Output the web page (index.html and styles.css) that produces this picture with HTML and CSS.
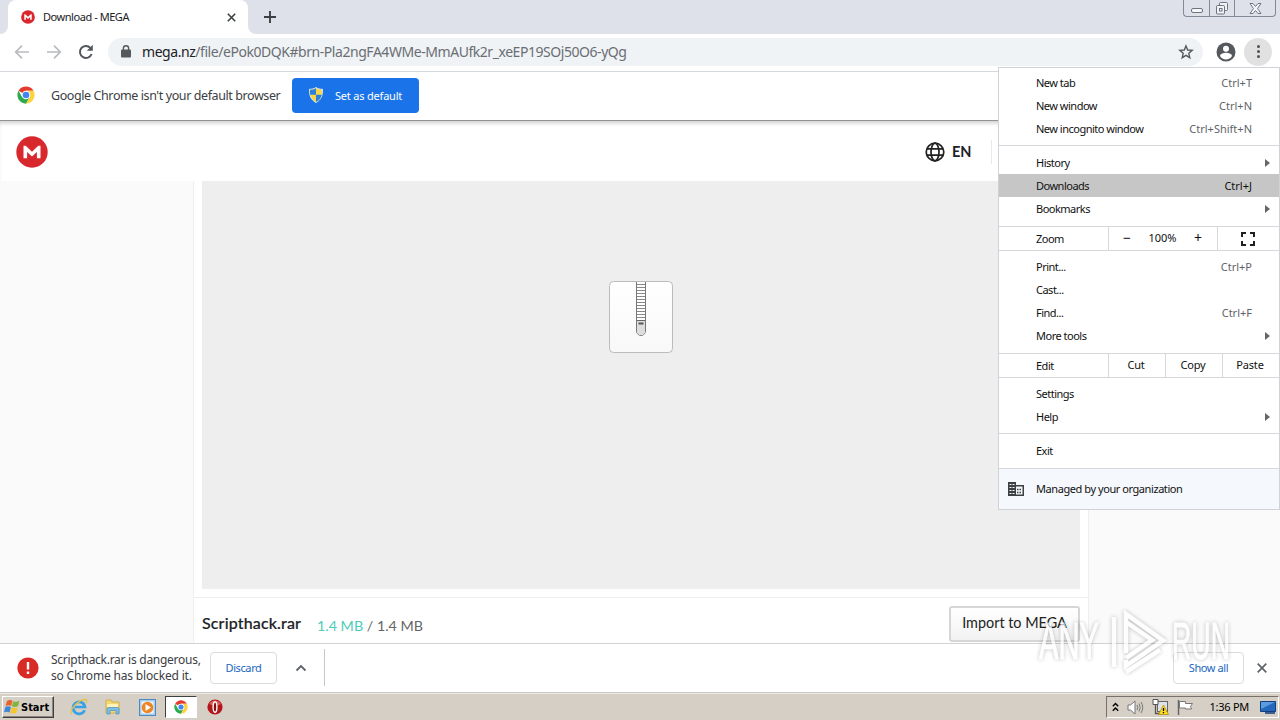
FILE: index.html
```html
<!DOCTYPE html>
<html lang="en">
<head>
    <meta charset="UTF-8">
    <meta name="viewport" content="width=device-width, initial-scale=1.0">
    <title>Download - MEGA</title>
    <link rel="stylesheet" href="styles.css">
</head>
<body>
    <!-- shared icons -->
    <svg class="defs" width="0" height="0">
        <symbol id="mega" viewBox="0 0 32 32">
            <circle cx="16" cy="16" r="15.7" fill="#d9272e"/>
            <path d="M7.500 22.300V9.700h2.200l6.300 6 6.300-6h2.200v12.600h-3.600v-6.300L16 20.600 11.100 16v6.300z" fill="#fff"/>
        </symbol>
        <symbol id="chrome" viewBox="0 0 48 48">
            <circle cx="24" cy="24" r="23" fill="#fff"/>
            <path d="M24 24 4.1 12.5A23 23 0 0 1 43.9 12.5H24z" fill="#e33b2e"/>
            <path d="M4.1 12.5A23 23 0 0 0 24 47l10-17.2H14z" fill="#2da94f"/>
            <path d="M43.9 12.5A23 23 0 0 1 24 47l10-17.2L34 18 24 12.5z" fill="#fdd23c"/>
            <circle cx="24" cy="24" r="11.5" fill="#fff"/>
            <circle cx="24" cy="24" r="8.8" fill="#4285f4"/>
        </symbol>
    </svg>

    <div class="tabstrip">
        <div class="tab-edge"></div>
        <div class="tab">
            <svg width="14" height="14"><use href="#mega"/></svg>
            <span class="tab-title">Download - MEGA</span>
            <svg class="tab-close" width="9" height="9" viewBox="0 0 9 9"><path d="M.8.8l7.4 7.4M8.2.8L.8 8.2" stroke="#3c4043" stroke-width="1.6"/></svg>
        </div>
        <div class="tab-rest">
            <svg width="12" height="12" viewBox="0 0 12 12"><path d="M6 0v12M0 6h12" stroke="#3c4043" stroke-width="1.9"/></svg>
        </div>
        <div class="window-buttons">
            <span class="wb"><svg width="12" height="5" viewBox="0 0 12 5"><rect x=".5" y=".5" width="11" height="4" rx="1.5" fill="#f6f7f9" stroke="#6d7480"/></svg></span>
            <span class="wb"><svg width="14" height="13" viewBox="0 0 14 13" fill="#f0f2f5" stroke="#6d7480"><rect x="4.500" y=".5" width="8" height="8" rx="1"/><rect x="1.500" y="3.500" width="8" height="8.500" rx="1"/><rect x="4.500" y="6.500" width="2.500" height="2.500"/></svg></span>
            <span class="wb wide"><svg width="13" height="11" viewBox="0 0 13 11"><path d="M1 .5h3l2.500 3 2.500-3h3L8.500 5.500 12 10.500H9l-2.500-3-2.500 3H1l3.500-5z" fill="#f6f7f9" stroke="#6d7480"/></svg></span>
        </div>
    </div>

    <div class="toolbar">
        <svg class="nav-icon" width="16" height="16" viewBox="0 0 16 16"><path d="M15 8H2M8 1.700L1.700 8 8 14.300" fill="none" stroke="#b9bbbe" stroke-width="1.700"/></svg>
        <svg class="nav-icon" width="16" height="16" viewBox="0 0 16 16"><path d="M1 8h13M8 1.700L14.300 8 8 14.300" fill="none" stroke="#b9bbbe" stroke-width="1.700"/></svg>
        <svg class="nav-icon" width="16" height="16" viewBox="0 0 16 16"><path d="M13.600 10A6 6 0 1 1 12.400 3.900" fill="none" stroke="#53575c" stroke-width="2"/><path d="M14.800.8v6H8.800z" fill="#53575c"/></svg>
        <div class="omnibox">
            <svg width="10" height="13" viewBox="0 0 10 13"><rect x="0" y="4.500" width="10" height="8" rx="1" fill="#55595e"/><path d="M2.400 5V3.300a2.600 2.600 0 0 1 5.200 0V5" fill="none" stroke="#55595e" stroke-width="1.400"/></svg>
            <span class="url"><b>mega.nz</b>/file/ePok0DQK#brn-Pla2ngFA4WMe-MmAUfk2r_xeEP19SOj50O6-yQg</span>
            <svg width="16" height="16" viewBox="0 0 16 16"><path d="M8 1.900l1.700 4.100 4.500.4-3.400 2.900 1 4.400L8 11.400l-3.800 2.300 1-4.400-3.400-2.900 4.500-.4z" fill="none" stroke="#55595e" stroke-width="1.400"/></svg>
        </div>
        <svg class="avatar" width="20" height="20" viewBox="0 0 20 20"><circle cx="10" cy="10" r="9.500" fill="#55595e"/><circle cx="10" cy="6.700" r="3" fill="#fff"/><path d="M4 14c0-2 4-3.200 6-3.200S16 12 16 14a7 7 0 0 1-12 0z" fill="#fff"/></svg>
        <div class="menu-button"><i></i><i></i><i></i></div>
    </div>

    <div class="infobar">
        <svg width="18" height="18"><use href="#chrome"/></svg>
        <span class="infobar-text">Google Chrome isn't your default browser</span>
        <div class="default-button">
            <svg width="14" height="16" viewBox="0 0 14 16"><path d="M7 .5c2 1.500 4 1.800 6.500 1.800 0 6-1 10.200-6.500 13.200C1.500 12.500.5 8.300.5 2.300 3 2.300 5 2 7 .5z" fill="#f7d64a" stroke="#dfe8f2"/><path d="M7 1.200v6.500H1.200Q.9 5 1 2.800C3.500 2.800 5.300 2.500 7 1.200zM7 7.700h5.800C12 11.500 10 13.600 7 15z" fill="#2f7fd6"/></svg>
            <span>Set as default</span>
        </div>
    </div>

    <div class="page">
        <div class="page-header">
            <svg width="32" height="32"><use href="#mega"/></svg>
            <div class="language">
                <svg width="20" height="20" viewBox="0 0 20 20" fill="none" stroke="#222" stroke-width="1.700"><circle cx="10" cy="10" r="8.800"/><ellipse cx="10" cy="10" rx="4" ry="8.800"/><path d="M2 6.800h16M2 13.200h16"/></svg>
                <span>EN</span>
            </div>
        </div>
        <div class="page-body">
            <div class="content">
                <div class="preview">
                    <svg width="64" height="72" viewBox="0 0 64 72">
                        <defs><linearGradient id="paper" x2="0" y2="1"><stop offset="0" stop-color="#fff"/><stop offset="1" stop-color="#f8f8f8"/></linearGradient></defs>
                        <rect x=".5" y=".5" width="63" height="71" rx="4" fill="url(#paper)" stroke="#bbb"/>
                        <path d="M27.500 1v49a4.500 4.500 0 0 0 9 0V1" fill="#fff" stroke="#777"/>
                        <path d="M28 3.500h8M28 6.500h8M28 9.500h8M28 12.500h8M28 15.500h8M28 18.500h8M28 21.500h8M28 24.500h8M28 27.500h8M28 30.500h8M28 33.500h8M28 36.500h8" stroke="#888"/>
                        <path d="M28 40h8v10a4 4 0 0 1-8 0z" fill="#ddd"/>
                        <path d="M28 39.500h8" stroke="#666"/>
                        <path d="M29.500 42.500h5" stroke="#555" stroke-width="2"/>
                    </svg>
                </div>
                <div class="file-bar">
                    <span class="file-name">Scripthack.rar</span>
                    <span class="file-size"><em>1.4 MB</em> / 1.4 MB</span>
                    <div class="import-button">Import to MEGA</div>
                </div>
            </div>
        </div>
    </div>

    <div class="downloads">
        <svg width="22" height="22" viewBox="0 0 22 22"><circle cx="11" cy="11" r="10.600" fill="#d92b25"/><path d="M11 5v7.500M11 14.500V17" stroke="#fff" stroke-width="2.400"/></svg>
        <div class="download-text"><span class="line1">Scripthack.rar is dangerous,</span><br><span class="line2">so Chrome has blocked it.</span></div>
        <div class="outline-button discard">Discard</div>
        <svg class="chevron" width="12" height="8" viewBox="0 0 12 8"><path d="M1.500 6.500L6 2l4.500 4.500" fill="none" stroke="#5f6368" stroke-width="1.800"/></svg>
        <div class="divider"></div>
        <div class="outline-button show-all">Show all</div>
        <svg width="10" height="10" viewBox="0 0 10 10"><path d="M.7.700l8.600 8.600M9.300.700L.7 9.300" stroke="#5f6368" stroke-width="1.700"/></svg>
    </div>

    <div class="taskbar">
        <div class="start">
            <svg width="17" height="16" viewBox="0 0 17 16"><path d="M3 2q3-2 5.500-.2L7.200 7Q4.500 5.500 1.600 7z" fill="#e8622a"/><path d="M9.200 2.200q3 1.500 6.300-.5L14 7q-3 1.800-6 .3z" fill="#7fb53c"/><path d="M1.400 8q2.800-1.500 5.500.2L5.500 13.500Q3 12 0 13.300z" fill="#3d86d8"/><path d="M7.700 8.400q3 1.500 6-.2l-1.400 5.500q-3 1.700-6 0z" fill="#f5c52c"/></svg>
            <span>Start</span>
        </div>
        <div class="quick">
            <svg width="18" height="18" viewBox="0 0 18 18"><path d="M14.600 12.200A6 6 0 1 1 15 9H5" fill="none" stroke="#3aa0e6" stroke-width="2.700"/><path d="M1.500 16C-1 12 9 1 15.500 1.500c1.500.2 1.300 2 .5 3.500" fill="none" stroke="#e5c342" stroke-width="1.300"/></svg>
        </div>
        <div class="quick">
            <svg width="18" height="18" viewBox="0 0 18 18"><path d="M2 2h5l1 2h7v11H2z" fill="#f2d778" stroke="#d6ae48"/><path d="M3 6h11v3H3z" fill="#fff3b8"/><path d="M3 16v-5q0-1.500 1.500-1.500h9q1.500 0 1.500 1.500v5h-3v-3.500H6V16z" fill="#79bfe8" stroke="#4c91c4" stroke-width=".7"/></svg>
        </div>
        <div class="quick">
            <svg width="17" height="17" viewBox="0 0 17 17"><rect x=".5" y=".5" width="16" height="16" fill="#a9cdec" stroke="#4d88c2"/><rect x="2.500" y="2.500" width="12" height="12" fill="#eef6fc"/><circle cx="8.500" cy="8.500" r="5.800" fill="#ef8420"/><path d="M6.500 5l5.500 3.500L6.500 12z" fill="#fff"/></svg>
        </div>
        <div class="quick active"><svg width="14" height="14"><use href="#chrome"/></svg></div>
        <div class="quick">
            <svg width="16" height="16" viewBox="0 0 16 16"><circle cx="8" cy="8" r="7.600" fill="#b3161b"/><path d="M2 5a7 7 0 0 1 12 0q-5 3-12 0z" fill="#dd5a55"/><ellipse cx="8" cy="8" rx="1.900" ry="5.300" fill="#8c0d10" stroke="#fff" stroke-width="1.400"/></svg>
        </div>
        <div class="tray">
            <svg width="7" height="10" viewBox="0 0 7 10"><path d="M.8 4.200L3.500 1.500l2.700 2.700M.8 8.700L3.500 6l2.700 2.700" fill="none" stroke="#000" stroke-width="1.400"/></svg>
            <svg width="17" height="15" viewBox="0 0 17 15"><path d="M1 5h2.500L8 1v13L3.500 10H1z" fill="#fff" stroke="#777"/><path d="M10 5q1.500 2.500 0 5M12 3.500q2.500 4 0 8M14 2q3.500 5.500 0 11" fill="none" stroke="#777"/></svg>
            <svg width="17" height="16" viewBox="0 0 17 16"><rect x="5.500" y="2.500" width="10" height="10" fill="#dfe3e8" stroke="#666"/><path d="M1 .5h5v5H1z" fill="#fff" stroke="#555"/><path d="M3.500 5.500v9H9" fill="none" stroke="#555" stroke-width="1.300"/><path d="M11.500 6l5 9.500h-10z" fill="#ffdb20" stroke="#a88600" stroke-width=".7"/><path d="M11.500 9v3M11.500 13v1.300" stroke="#000" stroke-width="1.300"/></svg>
            <svg width="17" height="15" viewBox="0 0 17 15"><path d="M1.500 0v15" stroke="#666" stroke-width="1.500"/><path d="M2.500 1.500h6v2h7l-2 3 1 2.500h-6V8h-6z" fill="#fff" stroke="#777"/></svg>
            <span class="clock">1:36 PM</span>
            <svg width="16" height="13" viewBox="0 0 16 13"><path d="M.5.500h15v10H.5z" fill="#2468bd" stroke="#123f7b"/><path d="M1 1h14L1 8z" fill="#5b9bdf"/><path d="M5 12h10" stroke="#3c5f8d" stroke-width="2"/></svg>
        </div>
    </div>

    <div class="menu">
        <div class="group first">
            <div class="item"><span>New tab</span><kbd>Ctrl+T</kbd></div>
            <div class="item"><span>New window</span><kbd>Ctrl+N</kbd></div>
            <div class="item"><span>New incognito window</span><kbd>Ctrl+Shift+N</kbd></div>
        </div>
        <div class="group history">
            <div class="item"><span>History</span><i class="arrow"></i></div>
            <div class="item selected"><span>Downloads</span><kbd>Ctrl+J</kbd></div>
            <div class="item"><span>Bookmarks</span><i class="arrow"></i></div>
        </div>
        <div class="buttons">
            <span class="label">Zoom</span>
            <div class="zoom"><span class="sign">−</span><span>100%</span><span class="sign">+</span></div>
            <div class="fullscreen"><svg width="14" height="14" viewBox="0 0 14 14"><path d="M1 5V1h4M9 1h4v4M13 9v4H9M5 13H1V9" fill="none" stroke="#202124" stroke-width="2"/></svg></div>
        </div>
        <div class="group tools">
            <div class="item"><span>Print...</span><kbd>Ctrl+P</kbd></div>
            <div class="item"><span>Cast...</span></div>
            <div class="item"><span>Find...</span><kbd>Ctrl+F</kbd></div>
            <div class="item"><span>More tools</span><i class="arrow"></i></div>
        </div>
        <div class="buttons">
            <span class="label">Edit</span>
            <div class="edit">Cut</div>
            <div class="edit">Copy</div>
            <div class="edit">Paste</div>
        </div>
        <div class="group settings">
            <div class="item"><span>Settings</span></div>
            <div class="item"><span>Help</span><i class="arrow"></i></div>
        </div>
        <div class="group exit">
            <div class="item"><span>Exit</span></div>
        </div>
        <div class="managed">
            <svg width="16" height="14" viewBox="0 0 16 14"><path d="M0 0h8v3h8v11H0z" fill="#3c4043"/><path d="M1.500 2.500h5M1.500 5.500h5M1.500 8.500h5M1.500 11.500h5" stroke="#f5f8fc" stroke-width="1.200" stroke-dasharray="2 1"/><path d="M8 4.500h6.500v8H8z" fill="#f5f8fc"/><path d="M9 7.500h4M9 10.500h4" stroke="#3c4043" stroke-width="1.500" stroke-dasharray="1.500 1"/></svg>
            <span>Managed by your organization</span>
        </div>
    </div>

    <svg class="watermark" width="210" height="76" viewBox="0 0 210 76">
        <g fill="#fff" stroke="#fff" stroke-width="1">
            <text x="9" y="55" textLength="60" lengthAdjust="spacingAndGlyphs">ANY</text>
            <text x="142" y="55" textLength="58" lengthAdjust="spacingAndGlyphs">RUN</text>
        </g>
        <path d="M84 63V13M96 49V10l37 26.500L96 62V56M96 18l26 18-26 18M96 68l34-22" fill="none" stroke="#fff" stroke-width="4.500"/>
    </svg>
</body>
</html>
```
FILE: styles.css
```css
* {
    box-sizing: border-box;
}
body {
    margin: 0;
    width: 1280px;
    height: 720px;
    overflow: hidden;
    position: relative;
    display: flex;
    flex-direction: column;
    font-family: "Noto Sans", sans-serif;
    font-size: 11px;
    color: #202124;
    background: #fff;
}
svg {
    display: block;
    flex-shrink: 0;
}
span, kbd {
    white-space: nowrap;
}
.defs {
    position: absolute;
}

/* tabs */
.tabstrip {
    height: 34px;
    display: flex;
    background: #fff;
}
.tab-edge {
    width: 8px;
    background: #dee1e9;
    border-bottom-right-radius: 8px;
}
.tab {
    width: 240px;
    display: flex;
    align-items: center;
    padding: 0 12px 0 13px;
    background: #fff;
    border-radius: 8px 8px 0 0;
    box-shadow: 0 -8px 0 #dee1e9;
}
.tab-title {
    margin: -1px 0 0 8px;
    flex: 1;
    letter-spacing: -0.45px;
}
.tab-rest {
    flex: 1;
    padding: 11px 0 0 16px;
    background: #dee1e9;
    border-bottom-left-radius: 8px;
}
.window-buttons {
    display: flex;
    height: 34px;
    padding-right: 4px;
    background: #dee1e9;
}
.wb {
    width: 25px;
    height: 17px;
    display: flex;
    align-items: center;
    justify-content: center;
    border: 1px solid #838a97;
    border-top: none;
    border-right: none;
}
.wb:first-child {
    width: 26px;
    padding-top: 4px;
    border-bottom-left-radius: 4px;
}
.wb.wide {
    width: 42px;
    border-right: 1px solid #838a97;
    border-bottom-right-radius: 4px;
}

/* toolbar */
.toolbar {
    height: 38px;
    display: flex;
    align-items: center;
    padding: 0 8px 2px 14px;
    border-bottom: 1px solid #d5d8dc;
}
.nav-icon {
    margin-right: 16px;
}
.omnibox {
    width: 1095px;
    height: 28px;
    margin-left: -2px;
    display: flex;
    align-items: center;
    padding: 0 9px 0 13px;
    border-radius: 14px;
    background: #f0f3f6;
}
.url {
    flex: 1;
    margin-left: 11px;
    font-size: 14px;
    letter-spacing: -0.45px;
    color: #6a6e73;
}
.url b {
    font-weight: normal;
    color: #202124;
}
.avatar {
    margin: 0 8px 0 13px;
}
.menu-button {
    width: 28px;
    height: 28px;
    display: flex;
    flex-direction: column;
    align-items: center;
    justify-content: center;
    gap: 2px;
    border-radius: 50%;
    background: #e1e1e1;
}
.menu-button i {
    width: 3px;
    height: 3px;
    border-radius: 50%;
    background: #4e5256;
}

/* default browser bar */
.infobar {
    height: 49px;
    display: flex;
    align-items: center;
    padding: 0 0 2px 17px;
    border-bottom: 1px solid #929292;
}
.infobar-text {
    width: 241px;
    padding-left: 16px;
    font-size: 12.5px;
    letter-spacing: -0.41px;
    color: #3c4043;
}
.default-button {
    width: 127px;
    height: 35px;
    margin-left: 16px;
    display: flex;
    align-items: center;
    padding-left: 17px;
    gap: 12px;
    border-radius: 4px;
    background: #1a73e8;
    letter-spacing: -0.2px;
    color: #fff;
}

/* web page */
.page {
    height: 522px;
    display: flex;
    flex-direction: column;
    box-shadow: inset 0 4px 4px -2px #ccc;
}
.page-header {
    height: 60px;
    display: flex;
    align-items: center;
    padding: 1px 0 0 16px;
}
.language {
    width: 67px;
    height: 24px;
    margin-left: 877px;
    display: flex;
    align-items: center;
    gap: 7px;
    border-right: 1px solid #e9e9e9;
    font-family: Lato, sans-serif;
    font-size: 14.5px;
    font-weight: bold;
}
.page-body {
    flex: 1;
    display: flex;
    justify-content: center;
    padding-left: 2px;
    background: #fafafa;
}
.content {
    width: 896px;
    display: flex;
    flex-direction: column;
    background: #fff;
    border-left: 1px solid #eee;
    border-right: 1px solid #eee;
}
.preview {
    height: 408px;
    margin: 0 8px 8px;
    display: flex;
    justify-content: center;
    padding-top: 100px;
    background: #eee;
}
.file-bar {
    flex: 1;
    display: flex;
    align-items: flex-start;
    padding: 8px 8px 0;
    border-top: 1px solid #eee;
    font-family: Lato, sans-serif;
}
.file-name {
    width: 115px;
    padding-top: 7px;
    font-size: 16px;
    font-weight: 500;
    letter-spacing: 0.15px;
    -webkit-text-stroke: 0.2px #222;
}
.file-size {
    flex: 1;
    padding-top: 11px;
    font-size: 14.3px;
    color: #666;
}
.file-size em {
    font-style: normal;
    color: #4dccb8;
}
.import-button {
    width: 131px;
    height: 36px;
    padding-top: 6px;
    text-align: center;
    font-size: 14.4px;
    border: 2px solid #d6d6d6;
    border-radius: 3px;
    background: linear-gradient(#fff, #f2f2f2);
    color: #222;
}

/* download shelf */
.downloads {
    height: 50px;
    display: flex;
    align-items: center;
    padding: 0 13px 1px 17px;
    border-top: 1px solid #d2d2d2;
    border-bottom: 1px solid #c8c8c2;
}
.download-text {
    width: 159px;
    padding-left: 12px;
    font-size: 12px;
    line-height: 16px;
    color: #3c4043;
}
.line1 {
    letter-spacing: -0.27px;
}
.line2 {
    letter-spacing: -0.17px;
}
.outline-button {
    height: 32px;
    display: flex;
    align-items: center;
    justify-content: center;
    border: 1px solid #dadce0;
    border-radius: 4px;
    letter-spacing: -0.4px;
    color: #1967c0;
}
.discard {
    width: 67px;
    margin-left: 12px;
}
.chevron {
    margin-left: 18px;
}
.divider {
    width: 1px;
    height: 37px;
    margin-left: 17px;
    background: #c4c7cb;
}
.show-all {
    width: 71px;
    margin: 0 13px 0 auto;
    padding-bottom: 1px;
}

/* taskbar */
.taskbar {
    height: 27px;
    display: flex;
    align-items: center;
    padding: 0 1px 0 2px;
    background: #d5cfc6;
    border-top: 1px solid #efece6;
}
.start {
    width: 52px;
    height: 22px;
    display: flex;
    align-items: center;
    padding-left: 1px;
    border: 1px solid;
    border-color: #fff #404040 #404040 #fff;
    box-shadow: inset -1px -1px 0 #8a867e;
    font-family: "DejaVu Sans Condensed", "DejaVu Sans", sans-serif;
    font-size: 11px;
    font-weight: bold;
    color: #000;
}
.quick {
    width: 32px;
    height: 22px;
    margin-right: 2px;
    display: flex;
    align-items: center;
    justify-content: center;
}
.start + .quick {
    margin-left: 9px;
}
.active {
    background: #fff;
    border: 1px solid;
    border-color: #404040 #fff #fff #404040;
}
.tray {
    width: 173px;
    height: 22px;
    margin-left: auto;
    display: flex;
    align-items: center;
    justify-content: space-between;
    padding: 0 2px 0 5px;
    border: 1px solid;
    border-color: #76726b #fff #fff #76726b;
    color: #000;
}
.clock {
    margin: -1px 3px 0 8px;
    letter-spacing: -0.25px;
}

/* browser menu */
.menu {
    position: absolute;
    left: 998px;
    top: 67px;
    width: 282px;
    height: 443px;
    border: 1px solid #cfd3d7;
    background: #fff;
    letter-spacing: -0.5px;
    color: #111;
}
.group {
    padding: 5px 0;
    border-bottom: 1px solid #d6d9dc;
}
.group.first {
    padding-top: 3px;
}
.group.history {
    padding-bottom: 6px;
}
.group.tools {
    padding: 4px 0 6px;
}
.group.settings {
    padding-top: 4px;
}
.group.exit {
    padding-bottom: 6px;
}
.item {
    height: 23px;
    display: flex;
    align-items: center;
    justify-content: space-between;
    padding: 0 27px 0 37px;
}
.item kbd {
    font: inherit;
    letter-spacing: 0;
    color: #5f6368;
}
.item.selected {
    background: #c6c6c6;
}
.selected kbd {
    color: #111;
}
.arrow {
    margin-right: -18px;
    border: 4px solid transparent;
    border-left: 5px solid #666;
    border-right: none;
}
.buttons {
    height: 24px;
    display: flex;
    align-items: stretch;
    border-bottom: 1px solid #d6d9dc;
    line-height: 22px;
}
.buttons .label {
    width: 109px;
    padding: 1px 0 0 37px;
}
.zoom {
    width: 109px;
    display: flex;
    justify-content: space-between;
    padding: 0 15px 0 14px;
    border-left: 1px solid #d6d9dc;
    letter-spacing: 0;
}
.sign {
    font-size: 14px;
}
.fullscreen {
    flex: 1;
    display: flex;
    align-items: center;
    justify-content: center;
    padding-right: 2px;
    border-left: 1px solid #d6d9dc;
}
.edit {
    width: 57px;
    padding-right: 2px;
    text-align: center;
    letter-spacing: -0.2px;
    border-left: 1px solid #d6d9dc;
}
.managed {
    height: 40px;
    display: flex;
    align-items: center;
    padding-left: 9px;
    gap: 12px;
    background: #f5f8fc;
    letter-spacing: -0.43px;
}
.managed span {
    margin-top: -2px;
}

/* watermark over the lower right corner */
.watermark {
    position: absolute;
    left: 1030px;
    top: 604px;
    opacity: 0.7;
    filter: drop-shadow(0 0 2px rgba(0, 0, 0, 0.35));
    font-family: "Liberation Sans", sans-serif;
    font-size: 51px;
}
```
